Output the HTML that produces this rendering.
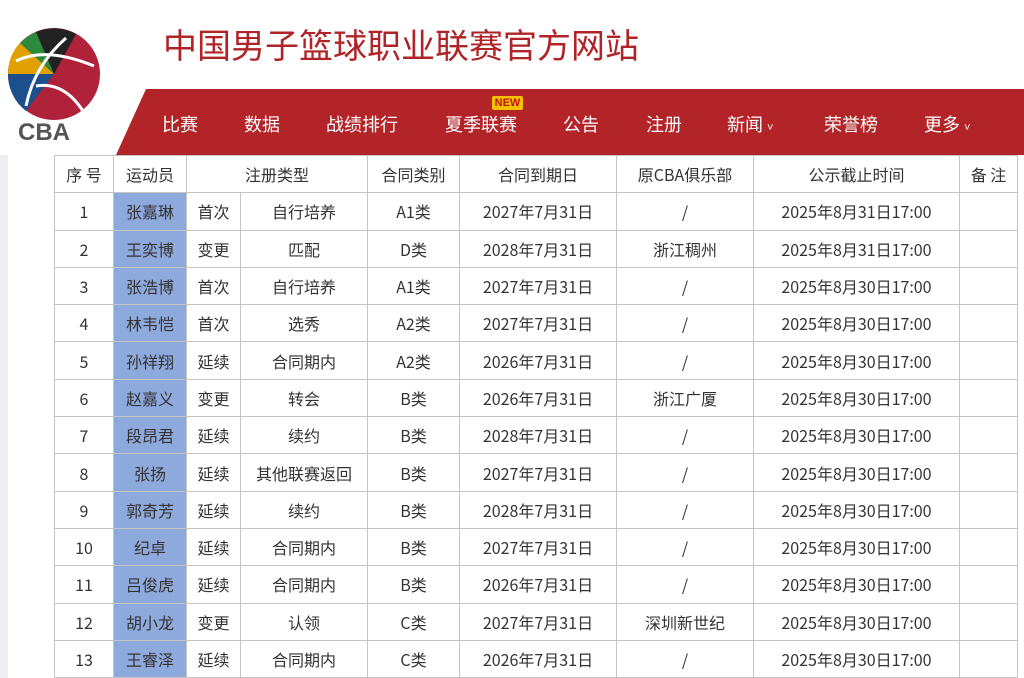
<!DOCTYPE html><html><head><meta charset="utf-8"><style>
body{margin:0;width:1024px;height:678px;overflow:hidden;background:#fff;font-family:"Noto Sans CJK SC","Liberation Sans",sans-serif;position:relative}
.t{position:absolute;left:163px;top:20px;font-size:34px;color:#b02327;line-height:48px}
.bar{position:absolute;left:116px;top:89px;width:908px;height:66px;background:#b22427;clip-path:polygon(30px 0,100% 0,100% 100%,0 100%)}
.n{position:absolute;top:111px;font-size:18px;color:#fff;line-height:26px}
.new{position:absolute;left:492px;top:96px;width:31px;height:14px;background:#f5c000;color:#c0121a;font-size:11px;font-weight:bold;text-align:center;line-height:14px;border-radius:2px;font-family:"Liberation Sans",sans-serif}
table{position:absolute;left:54px;top:155px;border-collapse:collapse;font-size:16px;color:#333}
td{border:1px solid #c4c4c4;text-align:center;height:36.3px;padding:0;line-height:20px}
.b{background:#8eaadc}
.side{position:absolute;left:0;top:155px;width:8px;height:523px;background:#eeeef3}
</style></head><body>
<svg style="position:absolute;left:6px;top:26px" width="96" height="120" viewBox="0 0 96 120">
<circle cx="48" cy="48" r="46" fill="#b0213a"/>
<path d="M48 48 L2 48 A46 46 0 0 1 14 17 Z" fill="#e0a000"/>
<path d="M48 48 L14 17 A46 46 0 0 1 30 6 Z" fill="#2c8a3c"/>
<path d="M48 48 L2 48 A46 46 0 0 0 20 85 Z" fill="#1d4f8c"/>
<path d="M48 48 L30 6 A46 46 0 0 1 70 8 Z" fill="#222"/>
<path d="M10 35 Q40 20 88 40 M20 80 Q28 40 60 12 M30 60 Q60 55 80 90" stroke="#fff" stroke-width="3" fill="none"/>
<text x="12" y="114" font-size="24" font-weight="bold" fill="#555" font-family="Liberation Sans">CBA</text>
</svg>
<div class="t">中国男子篮球职业联赛官方网站</div>
<div class="bar"></div>
<div class="n" style="left:162px">比赛</div>
<div class="n" style="left:244px">数据</div>
<div class="n" style="left:326px">战绩排行</div>
<div class="n" style="left:445px">夏季联赛</div>
<div class="new">NEW</div>
<div class="n" style="left:563px">公告</div>
<div class="n" style="left:646px">注册</div>
<div class="n" style="left:727px">新闻 <span style="font-size:11px">˅</span></div>
<div class="n" style="left:824px">荣誉榜</div>
<div class="n" style="left:924px">更多 <span style="font-size:11px">˅</span></div>
<div class="side"></div>
<table>
<colgroup><col style="width:59px"><col style="width:73px"><col style="width:54px"><col style="width:127px"><col style="width:92px"><col style="width:157px"><col style="width:137px"><col style="width:206px"><col style="width:58px"></colgroup>
<tr><td>序 号</td><td>运动员</td><td colspan="2">注册类型</td><td>合同类别</td><td>合同到期日</td><td>原CBA俱乐部</td><td>公示截止时间</td><td>备 注</td></tr>
<tr><td>1</td><td class="b">张嘉琳</td><td>首次</td><td>自行培养</td><td>A1类</td><td>2027年7月31日</td><td>/</td><td>2025年8月31日17:00</td><td></td></tr>
<tr><td>2</td><td class="b">王奕博</td><td>变更</td><td>匹配</td><td>D类</td><td>2028年7月31日</td><td>浙江稠州</td><td>2025年8月31日17:00</td><td></td></tr>
<tr><td>3</td><td class="b">张浩博</td><td>首次</td><td>自行培养</td><td>A1类</td><td>2027年7月31日</td><td>/</td><td>2025年8月30日17:00</td><td></td></tr>
<tr><td>4</td><td class="b">林韦恺</td><td>首次</td><td>选秀</td><td>A2类</td><td>2027年7月31日</td><td>/</td><td>2025年8月30日17:00</td><td></td></tr>
<tr><td>5</td><td class="b">孙祥翔</td><td>延续</td><td>合同期内</td><td>A2类</td><td>2026年7月31日</td><td>/</td><td>2025年8月30日17:00</td><td></td></tr>
<tr><td>6</td><td class="b">赵嘉义</td><td>变更</td><td>转会</td><td>B类</td><td>2026年7月31日</td><td>浙江广厦</td><td>2025年8月30日17:00</td><td></td></tr>
<tr><td>7</td><td class="b">段昂君</td><td>延续</td><td>续约</td><td>B类</td><td>2028年7月31日</td><td>/</td><td>2025年8月30日17:00</td><td></td></tr>
<tr><td>8</td><td class="b">张扬</td><td>延续</td><td>其他联赛返回</td><td>B类</td><td>2027年7月31日</td><td>/</td><td>2025年8月30日17:00</td><td></td></tr>
<tr><td>9</td><td class="b">郭奇芳</td><td>延续</td><td>续约</td><td>B类</td><td>2028年7月31日</td><td>/</td><td>2025年8月30日17:00</td><td></td></tr>
<tr><td>10</td><td class="b">纪卓</td><td>延续</td><td>合同期内</td><td>B类</td><td>2027年7月31日</td><td>/</td><td>2025年8月30日17:00</td><td></td></tr>
<tr><td>11</td><td class="b">吕俊虎</td><td>延续</td><td>合同期内</td><td>B类</td><td>2026年7月31日</td><td>/</td><td>2025年8月30日17:00</td><td></td></tr>
<tr><td>12</td><td class="b">胡小龙</td><td>变更</td><td>认领</td><td>C类</td><td>2027年7月31日</td><td>深圳新世纪</td><td>2025年8月30日17:00</td><td></td></tr>
<tr><td>13</td><td class="b">王睿泽</td><td>延续</td><td>合同期内</td><td>C类</td><td>2026年7月31日</td><td>/</td><td>2025年8月30日17:00</td><td></td></tr>
</table>
</body></html>
